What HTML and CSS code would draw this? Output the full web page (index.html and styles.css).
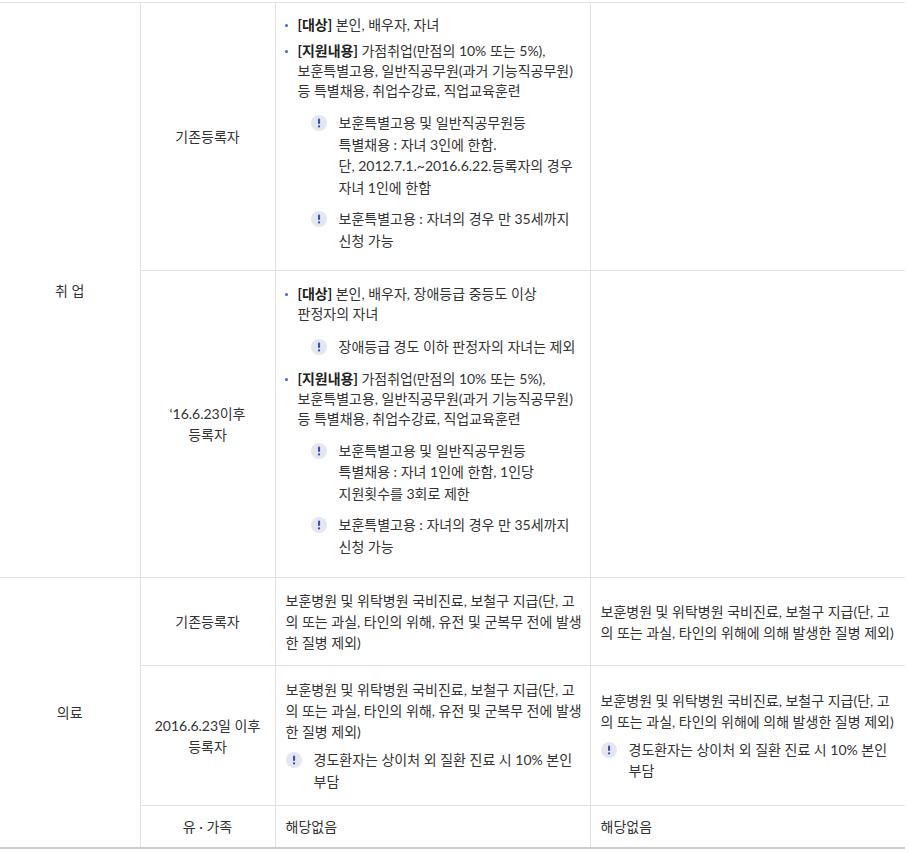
FILE: index.html
```html
<!DOCTYPE html>
<html lang="ko">
<head>
<meta charset="utf-8">
<title>보훈 지원 내용</title>
<link rel="stylesheet" href="styles.css">
</head>
<body>
<div class="wrap">
<table class="benefit">
  <colgroup>
    <col class="c-cat"><col class="c-type"><col class="c-old"><col class="c-new">
  </colgroup>
  <tbody>
    <tr>
      <th rowspan="2" class="cat">취 업</th>
      <th class="type">기존등록자</th>
      <td class="list-cell">
        <ul class="bullets">
          <li><b>[대상]</b> 본인, 배우자, 자녀</li>
          <li><b>[지원내용]</b> 가점취업(만점의 10% 또는 5%),<br>보훈특별고용, 일반직공무원(과거 기능직공무원)<br>등 특별채용, 취업수강료, 직업교육훈련
            <ul class="notes">
              <li><svg class="ico" viewBox="0 0 16 16"><circle cx="8" cy="8" r="8" fill="#e4e7f1"/><rect x="7" y="3.6" width="2.1" height="5.4" rx="1" fill="#3a4fae"/><circle cx="8.05" cy="11.4" r="1.15" fill="#3a4fae"/></svg><span>보훈특별고용 및 일반직공무원등<br>특별채용 : 자녀 3인에 한함.<br>단, 2012.7.1.~2016.6.22.등록자의 경우<br>자녀 1인에 한함</span></li>
              <li><svg class="ico" viewBox="0 0 16 16"><circle cx="8" cy="8" r="8" fill="#e4e7f1"/><rect x="7" y="3.6" width="2.1" height="5.4" rx="1" fill="#3a4fae"/><circle cx="8.05" cy="11.4" r="1.15" fill="#3a4fae"/></svg><span>보훈특별고용 : 자녀의 경우 만 35세까지<br>신청 가능</span></li>
            </ul>
          </li>
        </ul>
      </td>
      <td class="empty"></td>
    </tr>
    <tr>
      <th class="type">‘16.6.23이후<br>등록자</th>
      <td class="list-cell tall">
        <ul class="bullets">
          <li><b>[대상]</b> 본인, 배우자, 장애등급 중등도 이상<br>판정자의 자녀
            <ul class="notes first">
              <li><svg class="ico" viewBox="0 0 16 16"><circle cx="8" cy="8" r="8" fill="#e4e7f1"/><rect x="7" y="3.6" width="2.1" height="5.4" rx="1" fill="#3a4fae"/><circle cx="8.05" cy="11.4" r="1.15" fill="#3a4fae"/></svg><span>장애등급 경도 이하 판정자의 자녀는 제외</span></li>
            </ul>
          </li>
          <li><b>[지원내용]</b> 가점취업(만점의 10% 또는 5%),<br>보훈특별고용, 일반직공무원(과거 기능직공무원)<br>등 특별채용, 취업수강료, 직업교육훈련
            <ul class="notes">
              <li><svg class="ico" viewBox="0 0 16 16"><circle cx="8" cy="8" r="8" fill="#e4e7f1"/><rect x="7" y="3.6" width="2.1" height="5.4" rx="1" fill="#3a4fae"/><circle cx="8.05" cy="11.4" r="1.15" fill="#3a4fae"/></svg><span>보훈특별고용 및 일반직공무원등<br>특별채용 : 자녀 1인에 한함, 1인당<br>지원횟수를 3회로 제한</span></li>
              <li><svg class="ico" viewBox="0 0 16 16"><circle cx="8" cy="8" r="8" fill="#e4e7f1"/><rect x="7" y="3.6" width="2.1" height="5.4" rx="1" fill="#3a4fae"/><circle cx="8.05" cy="11.4" r="1.15" fill="#3a4fae"/></svg><span>보훈특별고용 : 자녀의 경우 만 35세까지<br>신청 가능</span></li>
            </ul>
          </li>
        </ul>
      </td>
      <td class="empty"></td>
    </tr>
    <tr class="sep">
      <th rowspan="3" class="cat">의료</th>
      <th class="type">기존등록자</th>
      <td>보훈병원 및 위탁병원 국비진료, 보철구 지급(단, 고의 또는 과실, 타인의 위해, 유전 및 군복무 전에 발생한 질병 제외)</td>
      <td>보훈병원 및 위탁병원 국비진료, 보철구 지급(단, 고의 또는 과실, 타인의 위해에 의해 발생한 질병 제외)</td>
    </tr>
    <tr class="mid">
      <th class="type">2016.6.23일 이후<br>등록자</th>
      <td>보훈병원 및 위탁병원 국비진료, 보철구 지급(단, 고의 또는 과실, 타인의 위해, 유전 및 군복무 전에 발생한 질병 제외)
        <ul class="notes flat">
          <li><svg class="ico" viewBox="0 0 16 16"><circle cx="8" cy="8" r="8" fill="#e4e7f1"/><rect x="7" y="3.6" width="2.1" height="5.4" rx="1" fill="#3a4fae"/><circle cx="8.05" cy="11.4" r="1.15" fill="#3a4fae"/></svg><span>경도환자는 상이처 외 질환 진료 시 10% 본인 부담</span></li>
        </ul>
      </td>
      <td>보훈병원 및 위탁병원 국비진료, 보철구 지급(단, 고의 또는 과실, 타인의 위해에 의해 발생한 질병 제외)
        <ul class="notes flat">
          <li><svg class="ico" viewBox="0 0 16 16"><circle cx="8" cy="8" r="8" fill="#e4e7f1"/><rect x="7" y="3.6" width="2.1" height="5.4" rx="1" fill="#3a4fae"/><circle cx="8.05" cy="11.4" r="1.15" fill="#3a4fae"/></svg><span>경도환자는 상이처 외 질환 진료 시 10% 본인 부담</span></li>
        </ul>
      </td>
    </tr>
    <tr class="short">
      <th class="type">유 · 가족</th>
      <td>해당없음</td>
      <td>해당없음</td>
    </tr>
  </tbody>
</table>
</div>
</body>
</html>
```

FILE: styles.css
```css
html, body {
  margin: 0;
  padding: 0;
  background: #ffffff;
}

body {
  font-family: Lato, "Noto Sans CJK KR", sans-serif;
  font-size: 14px;
  color: #333333;
}

.wrap {
  padding-top: 2px;
}

.benefit {
  width: 905px;
  border-collapse: collapse;
  table-layout: fixed;
  border-top: 1px solid #dcdcdc;
  border-bottom: 2px solid #cbcbcb;
}

.c-cat { width: 140px; }
.c-type { width: 135px; }
.c-old { width: 315px; }
.c-new { width: 315px; }

.benefit th,
.benefit td {
  border: 1px solid #e2e2e2;
  padding: 12px 10px;
  line-height: 21px;
  vertical-align: middle;
  text-align: left;
  font-weight: normal;
}

.benefit td {
  padding-right: 6px;
}

.benefit th {
  text-align: center;
}

.benefit .cat {
  border-left: 0;
}

.benefit td:last-child {
  border-right: 0;
}

.benefit .list-cell {
  padding: 12px 6px 14px 10px;
  vertical-align: top;
}

.benefit .list-cell.tall {
  padding-top: 13px;
  padding-bottom: 15px;
}

.benefit .mid td {
  padding-top: 13px;
  padding-bottom: 13px;
}

.benefit .short th,
.benefit .short td {
  padding-top: 10px;
  padding-bottom: 10px;
}

.bullets {
  list-style: none;
  margin: 0;
  padding: 0;
}

.bullets > li {
  display: flow-root;
  position: relative;
  padding-left: 12px;
  line-height: 20px;
}

.bullets > li + li {
  margin-top: 6px;
}

.bullets > li::before {
  content: "";
  position: absolute;
  left: -1px;
  top: 9px;
  width: 3px;
  height: 3px;
  border-radius: 50%;
  background: #4a5ed3;
}

.bullets b {
  font-weight: 700;
  color: #222222;
}

.notes {
  list-style: none;
  margin: 11px 0 5px 13px;
  padding: 0;
}

.notes.first {
  margin-top: 12px;
}

.notes.flat {
  margin: 7px 0 0 0;
}

.notes > li {
  display: flex;
  align-items: flex-start;
  gap: 12px;
  line-height: 21.5px;
}

.notes > li + li {
  margin-top: 10px;
}

.ico {
  flex: none;
  width: 16px;
  height: 16px;
  margin-top: 3px;
}
```
